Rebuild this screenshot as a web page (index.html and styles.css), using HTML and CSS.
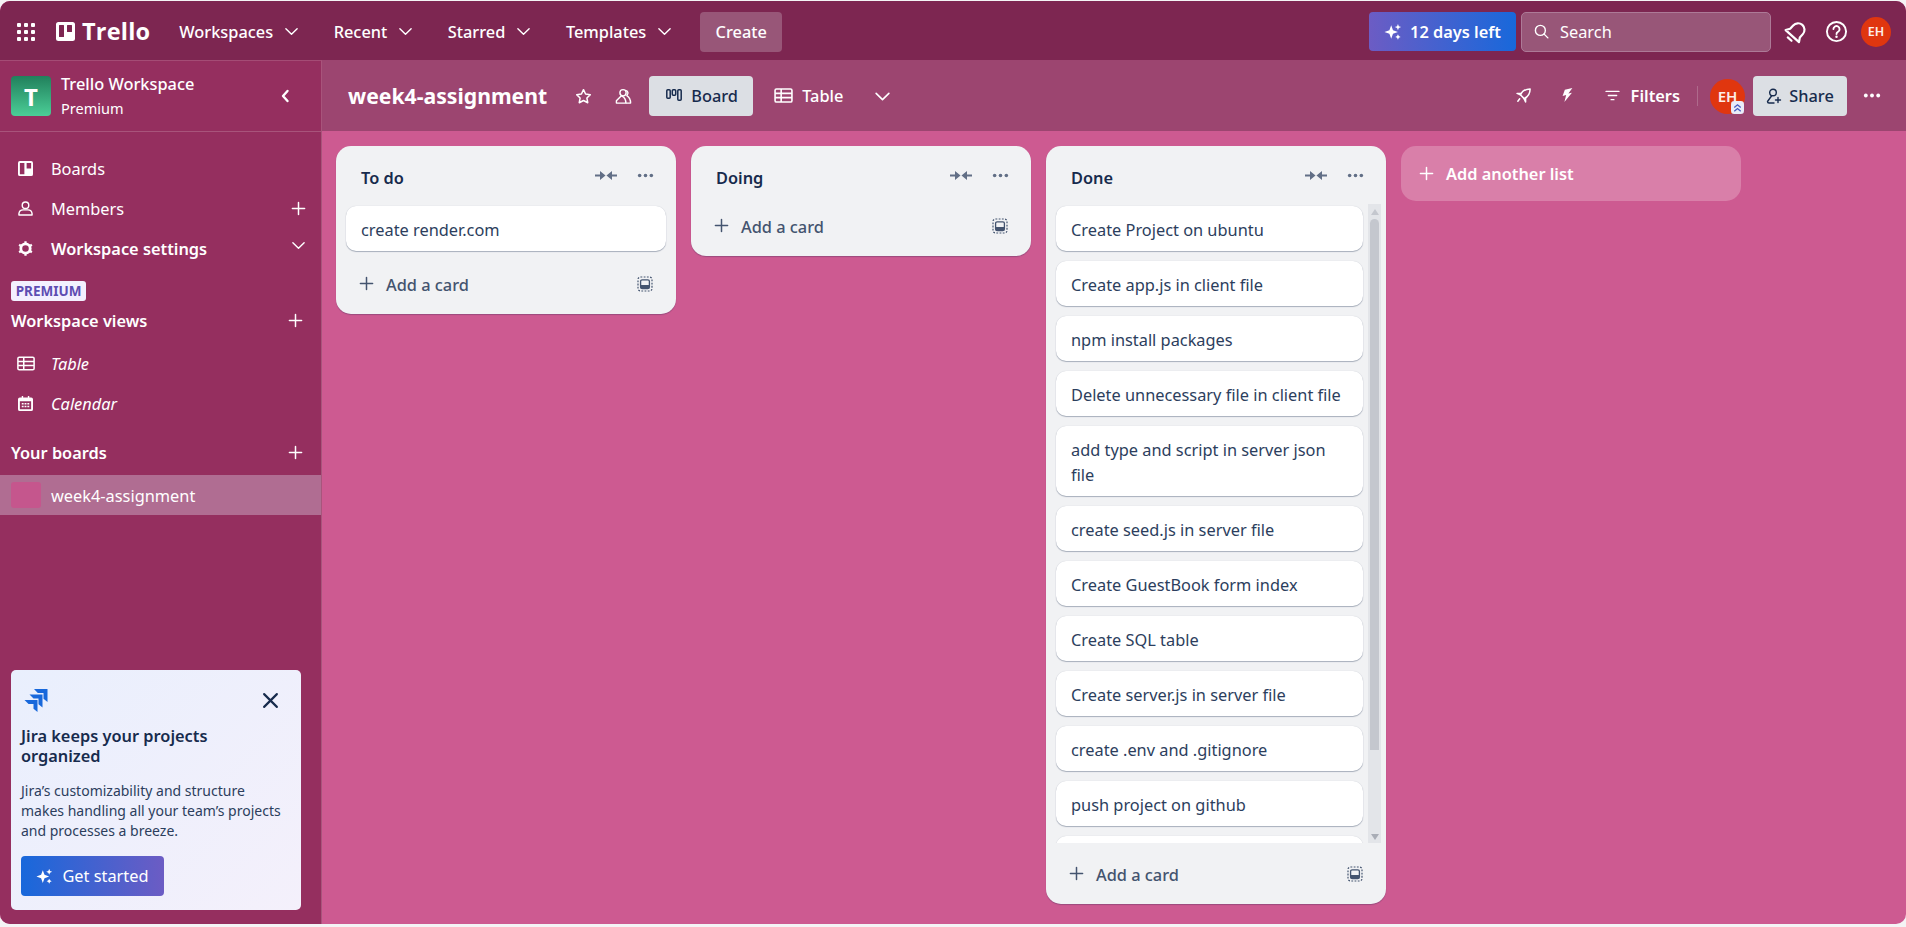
FILE: index.html
```html
<!DOCTYPE html>
<html lang="en">
<head>
<meta charset="utf-8">
<title>week4-assignment | Trello</title>
<link rel="stylesheet" href="styles.css">
</head>
<body>
<svg class="defs" aria-hidden="true">
  <symbol id="chev" viewBox="0 0 16 16"><path d="M2 5l6 6 6-6" fill="none" stroke="currentColor" stroke-width="1.5" stroke-linecap="round" stroke-linejoin="round"/></symbol>
  <symbol id="plus" viewBox="0 0 16 16"><path d="M8 1.5v13M1.5 8h13" fill="none" stroke="currentColor" stroke-width="1.6" stroke-linecap="round"/></symbol>
  <symbol id="spark" viewBox="0 0 20 20"><path fill="currentColor" d="M8 2.500l2 5.500 5.500 2-5.500 2-2 5.500-2-5.500L.5 10l5.500-2z"/><path fill="currentColor" d="M15.500 1l1 2.500 2.500 1-2.500 1-1 2.500-1-2.500-2.500-1 2.500-1zM15.500 12.500l1 2 2 1-2 1-1 2-1-2-2-1 2-1z"/></symbol>
  <symbol id="table" viewBox="0 0 20 16"><path fill="none" stroke="currentColor" stroke-width="1.700" d="M2.500 1h15A1.500 1.500 0 0 1 19 2.500v11a1.500 1.500 0 0 1-1.500 1.500h-15A1.500 1.500 0 0 1 1 13.500v-11A1.500 1.500 0 0 1 2.500 1zM1 5.700h18M1 10.300h18M7.500 1v14"/></symbol>
  <symbol id="collapse" viewBox="0 0 22 12"><path fill="currentColor" d="M0 5h5V1.500L10.500 6 5 10.500V7H0zM22 5h-5V1.500L11.500 6 17 10.500V7h5z"/></symbol>
  <symbol id="dots" viewBox="0 0 16 4"><circle cx="2.500" cy="2" r="1.700" fill="currentColor"/><circle cx="8" cy="2" r="1.700" fill="currentColor"/><circle cx="13.500" cy="2" r="1.700" fill="currentColor"/></symbol>
  <symbol id="tmpl" viewBox="0 0 16 16"><rect x="1" y="1" width="14" height="14" rx="2.500" fill="none" stroke="currentColor" stroke-width="1.200" stroke-dasharray="1.800 1.400"/><rect x="3.600" y="3.800" width="8.800" height="8.800" rx="1.500" fill="none" stroke="currentColor" stroke-width="1.300"/><rect x="3.600" y="9" width="8.800" height="3.600" fill="currentColor"/></symbol>
</svg>
<div class="app">
  <header class="nav">
    <svg class="ico-grid" viewBox="0 0 18 18"><g fill="currentColor"><rect x="0" y="0" width="4" height="4" rx="1"/><rect x="7" y="0" width="4" height="4" rx="1"/><rect x="14" y="0" width="4" height="4" rx="1"/><rect x="0" y="7" width="4" height="4" rx="1"/><rect x="7" y="7" width="4" height="4" rx="1"/><rect x="14" y="7" width="4" height="4" rx="1"/><rect x="0" y="14" width="4" height="4" rx="1"/><rect x="7" y="14" width="4" height="4" rx="1"/><rect x="14" y="14" width="4" height="4" rx="1"/></g></svg>
    <div class="logo">
      <svg class="logo-mark" viewBox="0 0 19 19"><path fill="currentColor" fill-rule="evenodd" d="M2.500 0h14A2.500 2.500 0 0 1 19 2.500v14a2.500 2.500 0 0 1-2.500 2.500h-14A2.500 2.500 0 0 1 0 16.500v-14A2.500 2.500 0 0 1 2.500 0zM3.500 3a.5.5 0 0 0-.5.5v11a.5.5 0 0 0 .5.5h4a.5.5 0 0 0 .5-.5v-11a.5.5 0 0 0-.5-.5zM11.500 3a.5.5 0 0 0-.5.5v6a.5.5 0 0 0 .5.5h4a.5.5 0 0 0 .5-.5v-6a.5.5 0 0 0-.5-.5z"/></svg>
      <span class="logo-text">Trello</span>
    </div>
    <nav class="menu">
      <span class="menu-item">Workspaces<svg class="chev"><use href="#chev"/></svg></span>
      <span class="menu-item">Recent<svg class="chev"><use href="#chev"/></svg></span>
      <span class="menu-item">Starred<svg class="chev"><use href="#chev"/></svg></span>
      <span class="menu-item">Templates<svg class="chev"><use href="#chev"/></svg></span>
    </nav>
    <span class="create">Create</span>
    <div class="nav-right">
      <span class="trial"><svg class="spark"><use href="#spark"/></svg>12 days left</span>
      <label class="search">
        <svg class="search-ico" viewBox="0 0 16 16"><circle cx="6.800" cy="6.800" r="5.300" fill="none" stroke="currentColor" stroke-width="1.500"/><path d="M10.800 10.800l4 4" stroke="currentColor" stroke-width="1.500" stroke-linecap="round"/></svg>
        <span>Search</span>
      </label>
      <svg class="ico-bell" viewBox="0 0 24 24"><g fill="none" stroke="currentColor" stroke-width="2.200" stroke-linejoin="round" stroke-linecap="round" transform="rotate(42 12 12)"><path d="M12 2.500a6.500 6.500 0 0 1 6.500 6.500v4.500l2.500 4H3l2.500-4V9A6.500 6.500 0 0 1 12 2.500z"/><path d="M9.500 21.500h5"/></g></svg>
      <svg class="ico-help" viewBox="0 0 24 24"><circle cx="12" cy="12" r="10" fill="none" stroke="currentColor" stroke-width="2"/><path d="M8.800 9.500a3.200 3.200 0 1 1 4.800 2.800c-1 .6-1.600 1.200-1.600 2.300" fill="none" stroke="currentColor" stroke-width="2" stroke-linecap="round"/><circle cx="12" cy="17.500" r="1.300" fill="currentColor"/></svg>
      <span class="avatar avatar-sm">EH</span>
    </div>
  </header>
  <div class="main">
    <aside class="sidebar">
      <div class="ws-head">
        <span class="ws-tile">T</span>
        <div class="ws-text">
          <div class="ws-name">Trello Workspace</div>
          <div class="ws-plan">Premium</div>
        </div>
        <span class="ws-collapse"><svg viewBox="0 0 10 14"><path d="M7.500 2L3 7l4.500 5" fill="none" stroke="currentColor" stroke-width="2.400" stroke-linecap="round" stroke-linejoin="round"/></svg></span>
      </div>
      <ul class="side-list side-main">
        <li class="side-row">
          <svg class="side-ico" viewBox="0 0 16 16"><path fill="currentColor" fill-rule="evenodd" d="M2 0h12a2 2 0 0 1 2 2v12a2 2 0 0 1-2 2H2a2 2 0 0 1-2-2V2a2 2 0 0 1 2-2zM2 2v12h4.800V2zM9.200 2v6H14V2z"/></svg>
          <span>Boards</span>
        </li>
        <li class="side-row">
          <svg class="side-ico" viewBox="0 0 16 16"><circle cx="8" cy="4.500" r="3.500" fill="none" stroke="currentColor" stroke-width="1.500"/><path d="M1 15v-1.500A4.500 4.500 0 0 1 5.500 9.500h5a4.500 4.500 0 0 1 4.500 4V15z" fill="none" stroke="currentColor" stroke-width="1.500" stroke-linejoin="round"/></svg>
          <span>Members</span>
          <svg class="side-act"><use href="#plus"/></svg>
        </li>
        <li class="side-row side-bold">
          <svg class="side-ico" viewBox="0 0 16 16"><circle cx="8" cy="8" r="5" fill="none" stroke="currentColor" stroke-width="3"/><g stroke="currentColor" stroke-width="2.400"><path d="M8 .2v2M8 13.800v2M1.200 4.100l1.700 1M13.100 10.900l1.700 1M1.200 11.900l1.700-1M13.100 5.100l1.700-1"/></g></svg>
          <span>Workspace settings</span>
          <svg class="side-act side-chev"><use href="#chev"/></svg>
        </li>
      </ul>
      <span class="premium">PREMIUM</span>
      <div class="side-head side-head-views"><span>Workspace views</span><svg class="side-act"><use href="#plus"/></svg></div>
      <ul class="side-list side-views">
        <li class="side-row side-italic">
          <svg class="side-ico side-ico-wide"><use href="#table"/></svg>
          <span>Table</span>
        </li>
        <li class="side-row side-italic">
          <svg class="side-ico" viewBox="0 0 16 16"><path fill="currentColor" fill-rule="evenodd" d="M4 0h1.500v1.500h5V0H12v1.500h2A2 2 0 0 1 16 3.500V14a2 2 0 0 1-2 2H2a2 2 0 0 1-2-2V3.500a2 2 0 0 1 2-2h2zM2 5.500V14h12V5.500z"/><path fill="currentColor" d="M4 7.500h2v1.500H4zM7 7.500h2v1.500H7zM10 7.500h2v1.500h-2zM4 10.500h2V12H4zM7 10.500h2V12H7zM10 10.500h2V12h-2z"/></svg>
          <span>Calendar</span>
        </li>
      </ul>
      <div class="side-head side-head-boards"><span>Your boards</span><svg class="side-act"><use href="#plus"/></svg></div>
      <div class="board-link"><span class="board-tile"></span><span>week4-assignment</span></div>
      <div class="promo">
        <div class="promo-top">
          <svg class="jira" viewBox="0 0 24 24"><g fill="#1868db"><path d="M10 1h13.500v13l-4-3.300V5H13.800z"/><path d="M5.500 6.500h13v13l-4-3.300v-5.700H9.500z"/><path d="M.5 12h13v12l-4-3.300v-4.700H4.500z"/></g></svg>
          <svg class="promo-x" viewBox="0 0 16 16"><path d="M2 2l12 12M14 2L2 14" stroke="currentColor" stroke-width="2" stroke-linecap="round"/></svg>
        </div>
        <h3 class="promo-title">Jira keeps your projects organized</h3>
        <p class="promo-body">Jira’s customizability and structure makes handling all your team’s projects and processes a breeze.</p>
        <span class="promo-btn"><svg class="spark"><use href="#spark"/></svg>Get started</span>
      </div>
    </aside>
    <section class="board">
      <div class="board-head">
        <h1 class="board-title">week4-assignment</h1>
        <svg class="bh-ico bh-star" viewBox="0 0 18 18"><path d="M9 1.800l2.200 4.600 5 .7-3.600 3.500.9 5L9 13.200l-4.500 2.400.9-5L1.800 7.100l5-.7z" fill="none" stroke="currentColor" stroke-width="1.600" stroke-linejoin="round"/></svg>
        <svg class="bh-ico bh-people" viewBox="0 0 18 18"><g fill="none" stroke="currentColor" stroke-width="1.500" stroke-linejoin="round"><circle cx="8.500" cy="5" r="3.300"/><path d="M6.500 8.500L1.500 13.500V16h10c0-3-1-6-4-7.500z"/><path d="M11 2.500c3 0 3.500 4 1.500 5.500 2.500 1.500 4 4 4 8h-5"/></g></svg>
        <span class="view-tab view-tab-on">
          <svg class="tab-ico" viewBox="0 0 16 12"><g fill="none" stroke="currentColor" stroke-width="1.500"><rect x=".8" y=".8" width="3.400" height="8.400" rx="1"/><rect x="6.300" y=".8" width="3.400" height="5.400" rx="1"/><rect x="11.800" y=".8" width="3.400" height="10.400" rx="1"/></g></svg>
          Board
        </span>
        <span class="view-tab view-tab-off"><svg class="tab-ico tab-ico-t"><use href="#table"/></svg>Table</span>
        <svg class="bh-chev"><use href="#chev"/></svg>
        <div class="bh-right">
          <svg class="bh-ico bh-rocket" viewBox="0 0 18 18"><g fill="none" stroke="currentColor" stroke-width="1.600" stroke-linejoin="round" stroke-linecap="round"><path d="M16 2c-4.500 0-8.300 2.200-10.300 6.300l4 4C13.800 10.300 16 6.500 16 2z"/><path d="M6.500 6.800H2.200l3.500 1.500M11.200 11.500v4.300l-1.500-3.500"/><path d="M5 12.500l-2 2.500"/></g></svg>
          <svg class="bh-ico bh-bolt" viewBox="0 0 14 18"><path fill="currentColor" d="M12.500 1L4 3 1.500 10l4-1-2 8L12 6.500l-4 .8z"/></svg>
          <svg class="bh-ico bh-filter" viewBox="0 0 16 12"><path d="M1 1.500h14M3.500 6h9M6.500 10.500h3" stroke="currentColor" stroke-width="1.600" stroke-linecap="round"/></svg>
          <span class="bh-filters">Filters</span>
          <span class="bh-div"></span>
          <span class="avatar avatar-md">EH
            <svg class="avatar-badge" viewBox="0 0 12 12"><rect width="12" height="12" rx="3" fill="#e9ecf8"/><path d="M3 6l3-2.500L9 6M3 9.500L6 7l3 2.500" fill="none" stroke="#4a5fc1" stroke-width="1.300"/></svg>
          </span>
          <span class="share"><svg class="share-ico" viewBox="0 0 16 16"><g fill="none" stroke="currentColor" stroke-width="1.400" stroke-linecap="round" stroke-linejoin="round"><circle cx="7" cy="4.500" r="3.300"/><path d="M5.500 8L1.500 13.500c0 1 .5 1.500 1.500 1.500h5"/><path d="M12 9.500v5M9.500 12h5"/></g></svg>Share</span>
          <svg class="bh-dots"><use href="#dots"/></svg>
        </div>
      </div>
      <div class="canvas">
        <div class="list">
          <div class="list-head"><span class="list-title">To do</span><svg class="l-collapse"><use href="#collapse"/></svg><svg class="l-dots"><use href="#dots"/></svg></div>
          <div class="cards">
            <div class="card">create render.com</div>
          </div>
          <div class="list-foot"><svg class="f-plus"><use href="#plus"/></svg><span class="f-text">Add a card</span><svg class="f-tmpl"><use href="#tmpl"/></svg></div>
        </div>
        <div class="list list-empty">
          <div class="list-head"><span class="list-title">Doing</span><svg class="l-collapse"><use href="#collapse"/></svg><svg class="l-dots"><use href="#dots"/></svg></div>
          <div class="list-foot"><svg class="f-plus"><use href="#plus"/></svg><span class="f-text">Add a card</span><svg class="f-tmpl"><use href="#tmpl"/></svg></div>
        </div>
        <div class="list">
          <div class="list-head"><span class="list-title">Done</span><svg class="l-collapse"><use href="#collapse"/></svg><svg class="l-dots"><use href="#dots"/></svg></div>
          <div class="scroll-wrap">
            <div class="cards cards-scroll">
              <div class="card">Create Project on ubuntu</div>
              <div class="card">Create app.js in client file</div>
              <div class="card">npm install packages</div>
              <div class="card">Delete unnecessary file in client file</div>
              <div class="card">add type and script in server json file</div>
              <div class="card">create seed.js in server file</div>
              <div class="card">Create GuestBook form index</div>
              <div class="card">Create SQL table</div>
              <div class="card">Create server.js in server file</div>
              <div class="card">create .env and .gitignore</div>
              <div class="card">push project on github</div>
              <div class="card card-clipped"></div>
            </div>
            <div class="scrollbar">
              <span class="sb-up"></span>
              <span class="sb-thumb"></span>
              <span class="sb-down"></span>
            </div>
          </div>
          <div class="list-foot"><svg class="f-plus"><use href="#plus"/></svg><span class="f-text">Add a card</span><svg class="f-tmpl"><use href="#tmpl"/></svg></div>
        </div>
        <div class="add-list"><svg class="add-plus"><use href="#plus"/></svg>Add another list</div>
      </div>
    </section>
  </div>
</div>
</body>
</html>
```
FILE: styles.css
```css
* { box-sizing: border-box; }
html, body { margin: 0; height: 100%; }
body {
  background: #f4f4f5;
  font-family: "Noto Sans", "Liberation Sans", sans-serif;
  font-size: 16.35px;
  overflow: hidden;
  padding-top: 1px;
}
.defs { display: none; }
ul { list-style: none; margin: 0; padding: 0; }
svg { display: block; flex: none; }
.app {
  height: 923px;
  border-radius: 10px;
  overflow: hidden;
  display: flex;
  flex-direction: column;
  background: #cd5a91;
}

/* top nav */
.nav {
  height: 59px;
  flex: none;
  background: #7d2651;
  color: #fff;
  display: flex;
  align-items: center;
  padding: 0 15px 0 17px;
}
.ico-grid { width: 18px; height: 18px; margin-top: 2px; }
.logo { display: flex; align-items: center; margin-left: 21px; gap: 7px; margin-top: 2px; }
.logo-mark { width: 19px; height: 19px; }
.logo-text { font-size: 23.5px; font-weight: 700; line-height: 1; letter-spacing: .2px; font-family: "Open Sans", sans-serif; }
.menu { display: flex; margin-left: 29px; gap: 34.5px; margin-top: 2px; }
.menu-item { display: flex; align-items: center; gap: 11px; font-weight: 500; }
.chev { width: 15px; height: 15px; }
.create {
  margin-left: 28px;
  width: 82px;
  height: 40px;
  margin-top: 2px;
  background: #985678;
  border-radius: 4px;
  display: flex;
  align-items: center;
  justify-content: center;
  font-weight: 500;
}
.nav-right { margin-left: auto; display: flex; align-items: center; margin-top: 2px; }
.trial {
  width: 147px;
  height: 39px;
  border-radius: 4px;
  background: linear-gradient(90deg, #6c5cc4, #1868db);
  display: flex;
  align-items: center;
  justify-content: center;
  gap: 8px;
  font-weight: 600;
}
.spark { width: 18px; height: 18px; }
.search {
  margin-left: 5px;
  width: 250px;
  height: 40px;
  border-radius: 5px;
  background: #985678;
  border: 1px solid #ad7a97;
  display: flex;
  align-items: center;
  padding-left: 12px;
  gap: 11px;
}
.search-ico { width: 15px; height: 15px; }
.ico-bell { width: 24px; height: 24px; margin-left: 13px; }
.ico-help { width: 23px; height: 23px; margin-left: 17px; }
.avatar {
  border-radius: 50%;
  background: #e0360f;
  display: flex;
  align-items: center;
  justify-content: center;
  font-weight: 600;
  color: #fdeee9;
  position: relative;
}
.avatar-sm { width: 30px; height: 30px; font-size: 12.5px; margin-left: 13px; }

/* layout */
.main { flex: 1; display: flex; min-height: 0; }

/* sidebar */
.sidebar {
  width: 322px;
  flex: none;
  background: #952f5f;
  color: #fff;
  border-right: 1px solid rgba(255, 255, 255, .18);
  border-top: 1px solid rgba(255, 255, 255, .14);
  display: flex;
  flex-direction: column;
}
.ws-head {
  height: 71px;
  flex: none;
  display: flex;
  align-items: center;
  padding: 0 18px 0 11px;
  border-bottom: 1px solid rgba(255, 255, 255, .18);
}
.ws-tile {
  width: 40px;
  height: 40px;
  border-radius: 4px;
  background: linear-gradient(180deg, #21805c, #4bce97);
  display: flex;
  align-items: center;
  justify-content: center;
  font-size: 24px;
  font-weight: 700;
}
.ws-text { margin-left: 10px; flex: 1; }
.ws-name { line-height: 24px; font-weight: 500; }
.ws-plan { font-size: 14.5px; line-height: 24px; }
.ws-collapse { width: 36px; height: 36px; display: flex; align-items: center; justify-content: center; }
.ws-collapse svg { width: 10px; height: 14px; }
.side-list { display: flex; flex-direction: column; }
.side-main { padding-top: 17px; }
.side-row { height: 40px; display: flex; align-items: center; padding: 0 15px 0 18px; }
.side-ico { width: 15px; height: 15px; margin-right: 18px; margin-top: -2px; }
.side-ico-wide { width: 18px; height: 15px; margin-left: -1px; margin-right: 16px; }
.side-bold { font-weight: 600; }
.side-italic { font-style: italic; }
.side-act { width: 15px; height: 15px; margin-left: auto; margin-top: -2px; }
.side-chev { margin-top: -8px; }
.premium {
  align-self: flex-start;
  margin: 12px 0 0 11px;
  height: 20px;
  width: 75px;
  border-radius: 3px;
  background: #f3f0ff;
  color: #5e4db2;
  font-size: 13.5px;
  font-weight: 700;
  line-height: 20px;
  text-align: center;
}
.side-head { display: flex; align-items: center; padding: 0 18px 0 11px; font-weight: 600; height: 24px; }
.side-head-views { margin-top: 8px; }
.side-views { margin-top: 11px; }
.side-head-boards { margin-top: 17px; }
.board-link {
  margin-top: 10px;
  height: 40px;
  background: #b06d92;
  display: flex;
  align-items: center;
  padding: 2px 0 0 11px;
  gap: 10px;
}
.board-tile { width: 30px; height: 26px; border-radius: 3px; background: #c5568d; margin-top: -2px; }
.promo {
  margin: auto 0 14px 11px;
  width: 290px;
  height: 240px;
  flex: none;
  border-radius: 5px;
  background: linear-gradient(135deg, #e9effd, #f4f0fb);
  color: #172b4d;
  padding: 18px 10px 0;
}
.promo-top { display: flex; justify-content: space-between; align-items: center; padding: 0 12px 0 3px; }
.jira { width: 24px; height: 24px; }
.promo-x { width: 17px; height: 17px; }
.promo-title { margin: 14px 0 0; font-size: 16.35px; line-height: 20px; font-weight: 600; width: 260px; }
.promo-body { margin: 15px 0 0; font-size: 14px; line-height: 20px; color: #2c3e5d; width: 270px; }
.promo-btn {
  margin-top: 15px;
  width: 143px;
  height: 40px;
  border-radius: 4px;
  background: linear-gradient(90deg, #1868db, #6c5cc4);
  color: #fff;
  display: flex;
  align-items: center;
  justify-content: center;
  gap: 9px;
}
.promo-btn .spark { width: 17px; height: 17px; }

/* board */
.board { flex: 1; min-width: 0; display: flex; flex-direction: column; }
.board-head {
  height: 71px;
  flex: none;
  background: #9c4570;
  color: #fff;
  display: flex;
  align-items: center;
  padding: 1px 25px 0 26px;
}
.board-title { margin: 0; font-size: 21.2px; font-weight: 700; line-height: 1; }
.bh-ico { width: 17px; height: 17px; }
.bh-star { margin-left: 28px; }
.bh-people { margin-left: 23px; }
.view-tab { display: flex; align-items: center; height: 40px; font-weight: 500; border-radius: 4px; }
.view-tab-on { margin-left: 17px; width: 104px; background: #dcdfe4; color: #172b4d; padding-left: 17px; gap: 9px; }
.view-tab-off { margin-left: 21px; gap: 9px; }
.tab-ico { width: 16px; height: 12px; margin-top: -2px; }
.tab-ico-t { width: 19px; height: 15px; }
.bh-chev { width: 17px; height: 17px; margin-left: 31px; }
.bh-right { margin-left: auto; display: flex; align-items: center; }
.bh-rocket { width: 17px; height: 17px; margin-top: -2px; }
.bh-bolt { width: 13px; height: 16px; margin-left: 29px; margin-top: -2px; }
.bh-filter { width: 15px; height: 11px; margin-left: 31px; margin-top: -2px; }
.bh-filters { margin-left: 11px; font-weight: 600; }
.bh-div { width: 1px; height: 20px; background: rgba(255, 255, 255, .2); margin-left: 17px; }
.avatar-md { width: 35px; height: 35px; margin-left: 12px; font-size: 15px; }
.avatar-badge { position: absolute; right: 1px; bottom: 0; width: 13px; height: 13px; }
.share {
  margin-left: 8px;
  width: 94px;
  height: 40px;
  border-radius: 4px;
  background: #dcdfe4;
  color: #172b4d;
  display: flex;
  align-items: center;
  justify-content: center;
  gap: 7px;
  font-weight: 500;
}
.share-ico { width: 16px; height: 16px; }
.bh-dots { width: 18px; height: 5px; margin-left: 16px; margin-top: -1px; }

/* lists */
.canvas {
  flex: 1;
  min-height: 0;
  display: flex;
  align-items: flex-start;
  gap: 15px;
  padding: 15px 0 0 14px;
}
.list {
  width: 340px;
  flex: none;
  border-radius: 15px;
  background: #f1f2f4;
  box-shadow: 0 1px 1px rgba(9, 30, 66, .25);
  color: #172b4d;
}
.list-head { height: 58px; display: flex; align-items: center; padding: 5px 22px 0 25px; }
.list-title { font-weight: 600; flex: 1; }
.l-collapse { width: 22px; height: 13px; color: #626f86; margin-top: -5px; }
.l-dots { width: 17px; height: 5px; color: #626f86; margin-left: 20px; margin-top: -5px; }
.cards { display: flex; flex-direction: column; gap: 10px; padding: 2px 10px; }
.card {
  min-height: 45px;
  background: #fff;
  border-radius: 10px;
  box-shadow: 0 1px 1px rgba(9, 30, 66, .3), 0 0 1px rgba(9, 30, 66, .2);
  padding: 12px 15px 8px;
  line-height: 25px;
  color: #2c3e5d;
  flex: none;
}
.card-clipped { height: 45px; }
.scroll-wrap { height: 639px; display: flex; overflow: hidden; }
.cards-scroll { flex: none; width: 317px; padding-right: 0; }
.scrollbar {
  margin-left: 5px;
  width: 13px;
  height: 100%;
  background: #e3e5e9;
  display: flex;
  flex-direction: column;
  align-items: center;
}
.sb-up, .sb-down { width: 0; height: 0; border-left: 4px solid transparent; border-right: 4px solid transparent; flex: none; }
.sb-up { margin-top: 5px; border-bottom: 6px solid #c4c7ce; }
.sb-thumb { width: 9px; height: 531px; margin-top: 4px; border-radius: 5px 5px 0 0; background: #c4c7ce; flex: none; }
.sb-down { margin-top: auto; margin-bottom: 3px; border-top: 6px solid #a9adb6; }
.list-foot { height: 61px; display: flex; align-items: center; padding: 2px 23px 0 23px; color: #44546f; }
.list-empty .list-foot { margin-top: -9px; }
.f-plus { width: 15px; height: 15px; margin-top: -2px; }
.f-text { margin-left: 12px; font-weight: 500; flex: 1; padding-top: 1px; }
.f-tmpl { width: 16px; height: 16px; margin-top: -2px; }
.add-list {
  width: 340px;
  flex: none;
  height: 55px;
  border-radius: 15px;
  background: #d97fa9;
  color: #fff;
  display: flex;
  align-items: center;
  padding-left: 18px;
  gap: 12px;
  font-weight: 600;
}
.add-plus { width: 15px; height: 15px; }
```
